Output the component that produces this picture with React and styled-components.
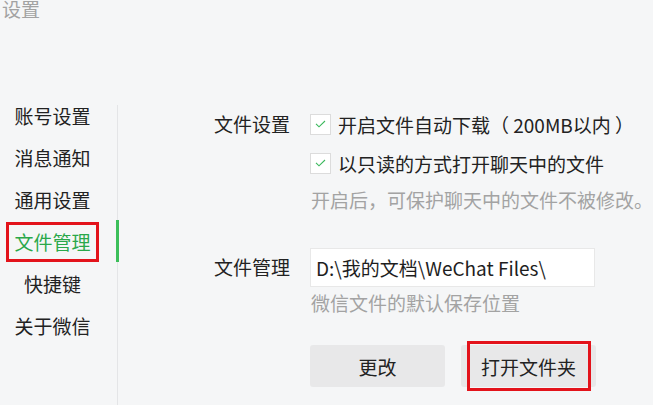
import styled, { createGlobalStyle } from "styled-components"

const GlobalStyle = createGlobalStyle`
  html, body {
    margin: 0;
    padding: 0;
    background: #f5f6f7;
  }
  body {
    font-family: "Noto Sans CJK SC", "Noto Sans", sans-serif;
    color: #222;
  }
`

const Page = styled.div`
  width: 653px;
  height: 405px;
  overflow: hidden;
  display: flex;
  flex-direction: column;
  background: #f5f6f7;
`

const Title = styled.div`
  font-size: 19px;
  line-height: 18px;
  height: 18px;
  padding-left: 2px;
  color: #a2a2a2;
`

const Body = styled.div`
  flex: 1;
  margin-top: 87px;
  display: flex;
`

const Sidebar = styled.nav`
  width: 106px;
  padding-right: 12px;
  border-right: 1px solid #e4e5e7;
  display: flex;
  flex-direction: column;
  gap: 22px;
`

const NavItem = styled.div`
  position: relative;
  height: 20px;
  line-height: 22px;
  font-size: 19px;
  text-align: center;
  color: ${(p) => (p.$active ? "#2aa84a" : "#222")};

  ${(p) =>
    p.$active &&
    `
    &::before {
      content: "";
      position: absolute;
      left: 116px;
      top: -11px;
      width: 3px;
      height: 42px;
      background: #3cbf5a;
    }
    &::after {
      content: "";
      position: absolute;
      left: 6px;
      right: 6px;
      top: -9px;
      bottom: -11px;
      border: 3px solid #e3131b;
    }
  `}
`

const Main = styled.main`
  flex: 1;
  padding: 8px 0 0 96px;
  display: flex;
  flex-direction: column;
  gap: 37px;
  white-space: nowrap;
`

const Section = styled.section`
  display: grid;
  grid-template-columns: 96px 1fr;
  align-items: start;
`

const Label = styled.div`
  font-size: 19px;
  line-height: 22px;
  height: ${(p) => p.$h || 22}px;
  display: flex;
  align-items: center;
  color: #222;
`

const Stack = styled.div`
  display: flex;
  flex-direction: column;
`

const Option = styled.label`
  display: flex;
  align-items: center;
  gap: 7px;
  height: 22px;
  font-size: 19px;
  color: #222;
  margin-bottom: 17px;
`

const Box = styled.span`
  width: 21px;
  height: 21px;
  flex-shrink: 0;
  box-sizing: border-box;
  background: #fff;
  border: 1px solid #dcdcdc;
  display: flex;
  align-items: center;
  justify-content: center;
`

const Hint = styled.div`
  font-size: 19px;
  line-height: 22px;
  color: #a3a3a3;
  margin-top: ${(p) => p.$mt || 0}px;
  margin-left: 1px;
`

const PathInput = styled.div`
  width: 285px;
  height: 39px;
  box-sizing: border-box;
  background: #fff;
  border: 1px solid #e8e8e8;
  padding-left: 5px;
  display: flex;
  align-items: center;
  font-size: 19px;
  color: #1e1e1e;
`

const Buttons = styled.div`
  display: flex;
  gap: 16px;
  margin-top: 31px;
`

const Button = styled.button`
  position: relative;
  width: 135px;
  height: 42px;
  border: none;
  border-radius: 3px;
  background: #e8e8e9;
  font-family: inherit;
  font-size: 19px;
  color: #222;
  padding: 0;

  ${(p) =>
    p.$marked &&
    `
    &::after {
      content: "";
      position: absolute;
      left: 6px;
      right: 5px;
      top: -4px;
      bottom: -4px;
      border: 3px solid #e3131b;
    }
  `}
`

function Check() {
  return (
    <svg width="11" height="8" viewBox="0 0 11 8" fill="none">
      <path d="M1 3.8 L4 6.8 L10 1" stroke="#3bb85c" strokeWidth="1.1" />
    </svg>
  )
}

const navItems = ["账号设置", "消息通知", "通用设置", "文件管理", "快捷键", "关于微信"]

export default function App() {
  return (
    <Page>
      <GlobalStyle />
      <Title>设置</Title>
      <Body>
        <Sidebar>
          {navItems.map((item) => (
            <NavItem key={item} $active={item === "文件管理"}>
              {item}
            </NavItem>
          ))}
        </Sidebar>
        <Main>
          <Section>
            <Label>文件设置</Label>
            <Stack>
              <Option>
                <Box>
                  <Check />
                </Box>
                开启文件自动下载（ 200MB以内 ）
              </Option>
              <Option>
                <Box>
                  <Check />
                </Box>
                以只读的方式打开聊天中的文件
              </Option>
              <Hint $mt={-2}>开启后，可保护聊天中的文件不被修改。</Hint>
            </Stack>
          </Section>
          <Section>
            <Label $h={37}>文件管理</Label>
            <Stack>
              <PathInput>D:\我的文档\WeChat Files\</PathInput>
              <Hint $mt={5}>微信文件的默认保存位置</Hint>
              <Buttons>
                <Button>更改</Button>
                <Button $marked>打开文件夹</Button>
              </Buttons>
            </Stack>
          </Section>
        </Main>
      </Body>
    </Page>
  )
}
